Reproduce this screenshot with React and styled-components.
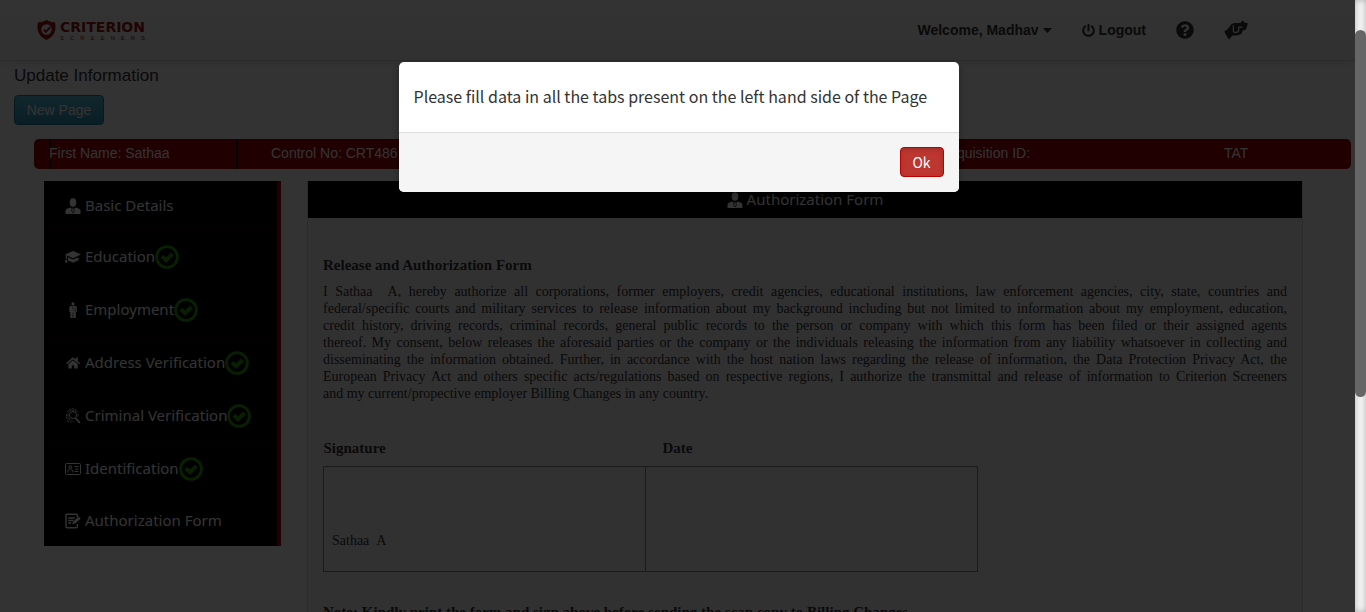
import React from 'react';
import styled, { createGlobalStyle, css } from 'styled-components';
import { FaQuestionCircle, FaPowerOff, FaHome } from 'react-icons/fa';

const sans = '"Liberation Sans", Arial, sans-serif';
const humanist = '"Noto Sans", "Open Sans", sans-serif';
const source = '"Noto Sans CJK SC", "Noto Sans", sans-serif';
const serif = '"Liberation Serif", "Times New Roman", serif';

const GlobalStyle = createGlobalStyle`
  *, *::before, *::after { box-sizing: border-box; }
  body { margin: 0; background: #fff; color: #333; font: 14px/20px ${sans}; overflow: hidden; }
`;

const Shell = styled.div`
  display: grid;
  grid-template-columns: minmax(0, 1fr) 11px;
  height: 100vh;
`;
const Page = styled.div`
  position: relative;
  overflow: hidden;
`;
const Track = styled.div`
  background: #f5f5f5;
  box-shadow: inset 0 0 6px rgba(0, 0, 0, 0.3);
  padding-top: 30px;
`;
const Thumb = styled.div`
  height: 63%;
  border-radius: 10px;
  background: #666;
`;

const Header = styled.header`
  display: flex;
  align-items: center;
  justify-content: space-between;
  height: 61px;
  padding: 0 107px 0 37px;
  background: linear-gradient(#fff, #f2f2f2);
  border-bottom: 1px solid #d4d4d4;
  box-shadow: 0 1px 10px rgba(0, 0, 0, 0.1);
`;
const Brand = styled.a`
  display: flex;
  align-items: center;
  gap: 4px;
  color: #a01414;
  text-decoration: none;
`;
const BrandText = styled.span`
  display: flex;
  flex-direction: column;
  padding-top: 2px;
`;
const BrandName = styled.span`
  font: bold 14px/14px "DejaVu Sans", ${sans};
`;
const BrandSub = styled.span`
  display: flex;
  justify-content: space-between;
  font: 6px/8px ${sans};
`;
const Nav = styled.nav`
  display: flex;
  align-items: center;
  gap: 30px;
`;
const NavLink = styled.a`
  display: flex;
  align-items: center;
  gap: 4px;
  color: #333;
  font-weight: bold;
  text-decoration: none;
`;

const Title = styled.h4`
  margin: 5px 0 9px 14px;
  font-size: 17px;
  line-height: 20px;
  font-weight: normal;
`;
const NewPage = styled.button`
  width: 90px;
  height: 30px;
  margin-left: 14px;
  padding: 0;
  border: 1px solid #1f7f9a;
  border-radius: 4px;
  background: linear-gradient(#5bc0de, #2f96b4);
  color: #fff;
  font: 14px/20px ${sans};
`;
const InfoBar = styled.div`
  display: grid;
  grid-template-columns: 204px 473px 420px 1fr;
  height: 30px;
  margin: 14px 4px 12px 34px;
  border-radius: 5px;
  background: #a00000;
  color: #fff;
  line-height: 28px;
`;
const InfoCell = styled.span`
  padding-left: ${(p) => p.$pad}px;
  ${(p) => p.$divided && css`
    margin-left: 15px;
    padding-left: 0;
    text-indent: -2px;
    border-left: 2px solid #111;
    border-right: 2px solid #111;
  `}
`;

const Columns = styled.div`
  display: grid;
  grid-template-columns: 237px minmax(0, 1fr);
  gap: 26px;
  align-items: start;
  padding: 0 52px 0 44px;
`;
const Menu = styled.nav`
  background: #000;
  border-right: 4px solid #b00000;
`;
const MenuLink = styled.a`
  display: flex;
  align-items: center;
  height: ${(p) => (p.$done ? 53 : 50)}px;
  padding-left: 21px;
  border-bottom: 1px solid #180000;
  color: #fff;
  font: 15px/24px ${humanist};
  text-decoration: none;
  &:last-child { border-bottom: 0; }
`;
const IconSlot = styled.span`
  display: flex;
  justify-content: center;
  width: 16px;
  margin-right: 4px;
`;
const Label = styled.span`
  padding-bottom: 2px;
`;

const Panel = styled.main`
  min-height: 560px;
  border: 1px solid #ddd;
  border-top: 0;
  background: #f5f5f5;
  font-family: ${serif};
`;
const PanelHead = styled.h3`
  display: flex;
  align-items: center;
  justify-content: center;
  gap: 4px;
  height: 37px;
  margin: 0;
  background: #000;
  color: #fff;
  font: 15px/24px ${humanist};
`;
const Doc = styled.div`
  padding: 37px 15px 0;
`;
const DocTitle = styled.h5`
  margin: 0 0 8px;
  font-size: 15px;
  line-height: 20px;
`;
const DocText = styled.p`
  margin: 0 0 10px;
  font-size: 14px;
  line-height: 17px;
  text-align: justify;
  text-align-last: justify;
`;
const LastLine = styled.span`
  display: block;
  text-align-last: left;
`;
const SignTable = styled.table`
  width: 655px;
  margin-top: 36px;
  border-collapse: collapse;
  font-size: 14px;
  line-height: 20px;
  th { padding: 0 0 8px; font-size: 15px; text-align: left; }
  th + th { padding-left: 17px; }
  td { height: 105px; padding: 44px 8px 0; border: 1px solid #888; }
  td:first-child { width: 322px; }
`;
const Note = styled.p`
  margin: 30px 0 0;
  font-size: 15px;
  line-height: 20px;
  font-weight: bold;
`;

const Backdrop = styled.div`
  position: absolute;
  inset: 0;
  background: rgba(0, 0, 0, 0.8);
`;
const Modal = styled.div`
  position: absolute;
  top: 62px;
  left: 50%;
  width: 560px;
  margin-left: -279px;
  border-radius: 5px;
  overflow: hidden;
  background: #fff;
  box-shadow: 0 3px 7px rgba(0, 0, 0, 0.3);
  font-family: ${source};
`;
const ModalBody = styled.p`
  margin: 0;
  padding: 22px 15px 24px;
  color: #333;
  font-size: 16px;
  line-height: 24px;
`;
const ModalFoot = styled.div`
  display: flex;
  justify-content: flex-end;
  padding: 14px 15px 15px;
  border-top: 1px solid #ddd;
  background: #f5f5f5;
`;
const OkButton = styled.button`
  width: 44px;
  height: 30px;
  padding: 0;
  border: 1px solid #c00000;
  border-radius: 4px;
  background: #bd362f;
  box-shadow: inset 0 2px 4px rgba(0, 0, 0, 0.15);
  color: #fff;
  font: 14px/20px ${source};
`;

const Shield = () => (
  <svg width="19" height="20" viewBox="0 0 19 20" aria-hidden="true">
    <path d="M9.500 0C7 1.600 4 2.300 1 2.300.4 5 .2 8 1 11c1 4 4 7 8.500 9 4.500-2 7.500-5 8.500-9 .8-3 .6-6 0-8.700C15 2.300 12 1.600 9.500 0z" fill="#a01414" />
    <circle cx="9.500" cy="9.500" r="5.200" fill="#f8f8f8" />
    <path d="M6.700 9.700l2.100 2.100 4.500-4.600" fill="none" stroke="#a01414" strokeWidth="1.900" />
  </svg>
);
const Caret = () => (
  <svg width="9" height="5" viewBox="0 0 9 5" fill="#333" aria-hidden="true"><path d="M0 0h9L4.500 5z" /></svg>
);
const Person = () => (
  <svg width="16" height="16" viewBox="0 0 16 16" fill="#fff" aria-hidden="true">
    <ellipse cx="8" cy="4.500" rx="3.300" ry="4.300" />
    <path d="M.5 16v-3.200C.5 11 3 10.300 5.600 9.600L8 12l2.400-2.400c2.600.7 5.100 1.400 5.100 3.200V16z" />
    <path d="M7.300 9.600h1.400l.7 3.400L8 15l-1.400-2z" stroke="#000" strokeWidth=".7" />
  </svg>
);
const Cap = () => (
  <svg width="16" height="14" viewBox="0 0 16 14" fill="#fff" aria-hidden="true">
    <path d="M8 1l8 3.600-8 3.600-6-2.600v3.600H.8V5L0 4.600z" />
    <path d="M3 7.300l5 2.300 5.500-2.400v3L8 12.800l-5-2.200zM.3 10h2v2.800h-2z" />
  </svg>
);
const Worker = () => (
  <svg width="16" height="16" viewBox="0 0 16 16" fill="#fff" aria-hidden="true">
    <circle cx="8" cy="1.900" r="1.700" />
    <path d="M5.800 4h4.400c1 0 1.600.7 1.600 1.700V10h-1v6H8.300v-5.500h-.6V16H5.300v-6h-1V5.700c0-1 .5-1.700 1.500-1.700z" />
    <path d="M8 4.200v4M10.200 6v4" stroke="#000" strokeWidth=".5" />
  </svg>
);
const Finger = () => (
  <svg width="16" height="16" viewBox="0 0 16 16" fill="none" stroke="#fff" aria-hidden="true">
    <circle cx="8" cy="7" r="3.500" strokeWidth="1" />
    <path d="M10.500 10l4.300 4.800" strokeWidth="1.800" />
    <path d="M2.300 4.500C3.200 2 5 .8 7.500.8S12 2 12.800 4.500M3.800 4C5 2.500 6 2.300 7.500 2.300s3 .5 4 2M1.500 6v4.500M3 5.500V11M2 12.500l2 1.500M4.300 10v2.500l2.400 2.700M6 11.500l3 3M13 6v2.500" strokeWidth=".8" strokeDasharray="2.500 .6" />
  </svg>
);
const IdCard = () => (
  <svg width="16" height="12" viewBox="0 0 16 12" fill="none" stroke="#fff" aria-hidden="true">
    <rect x=".5" y=".5" width="15" height="11" rx="1" />
    <circle cx="5.300" cy="4" r="1.300" />
    <path d="M2.800 9.500c0-2.500 1-3.500 2.500-3.500s2.500 1 2.500 3.500M9.500 3.500h4M10.500 6h3M9.500 8.500h4" />
  </svg>
);
const FormIcon = () => (
  <svg width="16" height="16" viewBox="0 0 16 16" fill="none" stroke="#fff" aria-hidden="true">
    <path d="M12.300 4V2.200a1 1 0 0 0-1-1H2a1 1 0 0 0-1 1v11.600a1 1 0 0 0 1 1h9.300a1 1 0 0 0 1-1V11" strokeWidth="1.400" />
    <path d="M3.200 5h6.500M3.200 7.500h5M3.200 10h3" strokeWidth="1.300" />
    <path d="M7.500 11l.8-2.500 5.200-4.800 2 2-5.200 4.600z" fill="#fff" strokeWidth=".4" />
  </svg>
);
const Check = () => (
  <svg width="24" height="24" viewBox="0 0 24 24" fill="none" stroke="#2a9c0a" aria-hidden="true">
    <circle cx="12" cy="12" r="10.400" strokeWidth="2.900" />
    <path d="M6.800 11.300l4.200 4 6.500-6.300" strokeWidth="4" />
  </svg>
);
const Hands = () => (
  <svg width="24" height="20" viewBox="0 0 24 20" aria-hidden="true">
    <path d="M.3 11.500L4 8.800 7 4.500 10 3h6.500l2-2.600 1.500 1.400.8 1L24 3.200l-2.200 6.600-3 .7-1.500 3.500-4 1.500H8.500L5 19.600 2 15z" fill="#333" />
    <path d="M9.300 5.300v5c0 1.500 1 2.200 2.300 2.200 1.700 0 3.200-1 3.200-2.700V7.200h3.500" fill="none" stroke="#f5f5f5" strokeWidth="1.200" />
  </svg>
);

const tabs = [
  { label: 'Basic Details', icon: <Person /> },
  { label: 'Education', icon: <Cap />, done: true },
  { label: 'Employment', icon: <Worker />, done: true },
  { label: 'Address Verification', icon: <FaHome size={14} />, done: true },
  { label: 'Criminal Verification', icon: <Finger />, done: true },
  { label: 'Identification', icon: <IdCard />, done: true },
  { label: 'Authorization Form', icon: <FormIcon /> },
];

export default function App() {
  return (
    <Shell>
      <GlobalStyle />
      <Page>
        <Header>
          <Brand href="#home">
            <Shield />
            <BrandText>
              <BrandName>CRITERION</BrandName>
              <BrandSub>{[...'SCREENERS'].map((c, i) => <span key={i}>{c}</span>)}</BrandSub>
            </BrandText>
          </Brand>
          <Nav>
            <NavLink href="#user">Welcome, Madhav <Caret /></NavLink>
            <NavLink href="#logout"><FaPowerOff size={13} /> Logout</NavLink>
            <NavLink href="#help" aria-label="Help"><FaQuestionCircle size={18} /></NavLink>
            <NavLink href="#support" aria-label="Support"><Hands /></NavLink>
          </Nav>
        </Header>
        <Title>Update Information</Title>
        <NewPage type="button">New Page</NewPage>
        <InfoBar>
          <InfoCell $divided>First Name: Sathaa</InfoCell>
          <InfoCell $pad={33}>Control No: CRT486</InfoCell>
          <InfoCell $pad={228}>Requisition ID:</InfoCell>
          <InfoCell $pad={93}>TAT</InfoCell>
        </InfoBar>
        <Columns>
          <Menu>
            {tabs.map((t) => (
              <MenuLink key={t.label} href="#tab" $done={t.done}>
                <IconSlot>{t.icon}</IconSlot>
                <Label>{t.label}</Label>
                {t.done && <Check />}
              </MenuLink>
            ))}
          </Menu>
          <Panel>
            <PanelHead><Person /> <Label>Authorization Form</Label></PanelHead>
            <Doc>
              <DocTitle>Release and Authorization Form</DocTitle>
              <DocText>
                I Sathaa &nbsp;A, hereby authorize all corporations, former employers, credit agencies, educational
                institutions, law enforcement agencies, city, state, countries and<br />
                federal/specific courts and military services to release information about my background including
                but not limited to information about my employment, education,<br />
                credit history, driving records, criminal records, general public records to the person or company
                with which this form has been filed or their assigned agents<br />
                thereof. My consent, below releases the aforesaid parties or the company or the individuals
                releasing the information from any liability whatsoever in collecting and<br />
                disseminating the information obtained. Further, in accordance with the host nation laws regarding
                the release of information, the Data Protection Privacy Act, the<br />
                European Privacy Act and others specific acts/regulations based on respective regions, I authorize
                the transmittal and release of information to Criterion Screeners
                <LastLine>and my current/propective employer Billing Changes in any country.</LastLine>
              </DocText>
              <SignTable>
                <thead><tr><th>Signature</th><th>Date</th></tr></thead>
                <tbody><tr><td>Sathaa &nbsp;A</td><td /></tr></tbody>
              </SignTable>
              <Note>Note: Kindly print the form and sign above before sending the scan copy to Billing Changes</Note>
            </Doc>
          </Panel>
        </Columns>
        <Backdrop />
        <Modal role="dialog" aria-modal="true">
          <ModalBody>Please fill data in all the tabs present on the left hand side of the Page</ModalBody>
          <ModalFoot><OkButton type="button">Ok</OkButton></ModalFoot>
        </Modal>
      </Page>
      <Track><Thumb /></Track>
    </Shell>
  );
}
